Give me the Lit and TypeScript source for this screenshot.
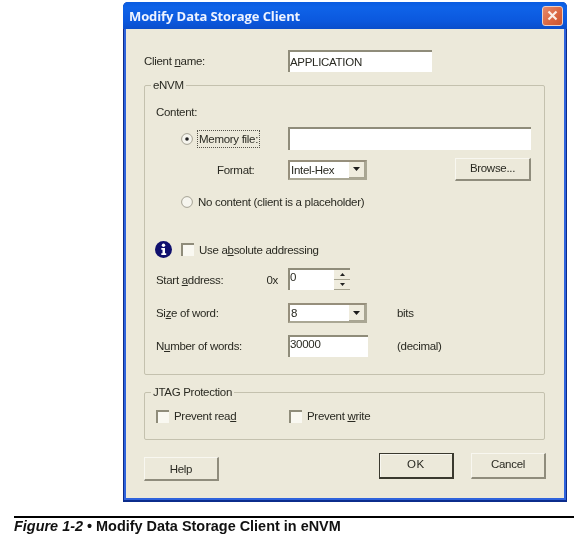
import { LitElement, html, css } from "lit";
import { customElement } from "lit/decorators.js";

const arrow = html`<svg class="tri" viewBox="0 0 7 4" width="7" height="4"><path d="M0 0H7L3.5 4Z" fill="#1c1c1c"/></svg>`;

@customElement("app-root")
export class AppRoot extends LitElement {
  static styles = css`
    :host { display: block; width: 574px; height: 537px; background: #fff; overflow: hidden;
      font-family: "Liberation Sans", Arial, sans-serif; font-size: 11.5px; letter-spacing: -0.3px; color: #2a2a22; }
    * { box-sizing: border-box; }
    .dialog { margin: 2px 0 0 123px; width: 444px; height: 500px; border-radius: 5px 5px 0 0;
      background: #2f63dc; padding: 0 2px 2px; border: solid #0b2c8c; border-width: 0 1px 2px 1px;
      display: flex; flex-direction: column; filter: blur(0.4px); }
    .title { height: 27px; margin: 0 -3px; padding: 0 4px 0 6px; border-radius: 5px 5px 0 0;
      background: linear-gradient(#0a5ce0, #0f63e8 20%, #0b58de 70%, #0a4ecb);
      display: flex; align-items: center; justify-content: space-between; }
    .title span { font: bold 13px "Open Sans", Verdana, sans-serif; letter-spacing: -0.1px; color: #eef3ff; }
    .close { width: 21px; height: 20px; border: 1px solid #eccfc4; border-radius: 3px;
      background: linear-gradient(135deg, #e58a6c, #d9653f 60%, #c9552f); display: flex; align-items: center; justify-content: center; }
    .body { flex: 1; background: #ece9da; padding: 21px 17px 0 18px; }
    .row { display: flex; align-items: center; }
    .lab { width: 132px; flex: none; }
    .top { height: 22px; }
    .top .lab { width: 144px; }
    .group { position: relative; width: 401px; border: 1px solid #c4c1ae; border-radius: 2px; padding: 0 13px 0 11px; }
    .group.env { margin-top: 13px; padding-top: 18px; padding-bottom: 17px; }
    .group.jtag { margin-top: 17px; padding-top: 16px; padding-bottom: 16px; }
    .legend { position: absolute; left: 6px; top: -8px; background: #ece9da; padding: 0 2px; line-height: 15px; }
    .h16 { height: 16px; }
    .field { background: #fff; border-style: solid; border-width: 2px 0 0 2px; border-color: #8f8c7a;
      padding: 0; display: flex; align-items: center; height: 100%; }
    .name { width: 144px; height: 22px; }
    .memrow { margin-top: 7px; height: 23px; }
    .mem { width: 243px; height: 23px; }
    .indent { display: flex; align-items: center; }
    .radio { width: 12px; height: 12px; margin-left: 25px; flex: none; }
    .focus { margin-left: 4px; padding: 1px 1px; border: 1px dotted #55534a; line-height: 14px; }
    .fmtrow { height: 23px; margin-top: 8px; }
    .fmtrow .lab { padding-left: 61px; }
    .select { width: 79px; height: 20px; background: #fff; border: 2px solid; border-color: #968f7c #aaa794 #aaa794 #968f7c;
      display: flex; align-items: center; justify-content: space-between; padding-left: 1px; }
    .dd { width: 16px; height: 16px; background: #efecde; border-right: 1px solid #a8a592; border-bottom: 1px solid #a8a592;
      display: flex; align-items: center; justify-content: center; }
    .btn { display: flex; align-items: center; justify-content: center; background: #ece9da;
      border-style: solid; border-width: 1px 2px 2px 1px; border-color: #f8f7f0 #8f8c7c #8f8c7c #f8f7f0; }
    .browse { width: 76px; height: 23px; margin-left: auto; padding-bottom: 3px; }
    .norow { height: 16px; margin-top: 13px; }
    .norow .txt { margin-left: 5px; }
    .absrow { height: 17px; margin-top: 31px; }
    .info { width: 17px; height: 17px; margin-left: -1px; flex: none; }
    .cb { width: 13px; height: 13px; flex: none; background: #f9f8f1; border-style: solid; border-width: 2px 0 0 2px; border-color: #8f8c7a; }
    .absrow .cb { margin-left: 9px; }
    .absrow .txt { margin-left: 5px; }
    .startrow { height: 22px; margin-top: 10px; }
    .startrow .lab { display: flex; justify-content: space-between; padding-right: 10px; padding-top: 2px; }
    .spin { width: 62px; height: 22px; background: #fff; border-style: solid; border-width: 2px 0 0 2px; border-color: #8f8c7a;
      display: flex; justify-content: space-between; padding-left: 0; align-items: flex-start; line-height: 15px; }
    .spinbtns { width: 16px; height: 20px; display: flex; flex-direction: column; justify-content: space-between; }
    .spinbtns i { height: 10px; background: #efecde; display: flex; align-items: center; justify-content: center; border-bottom: 1px solid #a8a592; }
    .sizerow { height: 20px; margin-top: 13px; }
    .unit { margin-left: 30px; }
    .unit.decimal { margin-left: 29px; }
    .numrow { height: 22px; margin-top: 12px; }
    .num { width: 80px; height: 22px; align-items: flex-start; line-height: 15px; }
    .jrow { height: 14px; display: flex; align-items: center; }
    .jitem { display: flex; align-items: center; gap: 5px; }
    .jitem.a { width: 133px; }
    .actions { display: flex; align-items: flex-start; margin-top: 13px; }
    .help { width: 75px; height: 24px; margin-top: 4px; }
    .ok { width: 75px; height: 26px; margin-left: 160px; border-width: 1px 2px 2px 1px; border-color: #3a392e; box-shadow: inset 1px 1px 0 #f8f7f0; letter-spacing: 0.6px; padding-bottom: 3px; }
    .cancel { width: 75px; height: 26px; margin-left: 17px; padding-bottom: 3px; }
    .rule { margin: 14px 0 0 14px; border-top: 2px solid #000; }
    .cap { margin-left: 14px; font: bold 14.45px/17px "Liberation Sans", Arial, sans-serif; letter-spacing: 0; color: #111; filter: blur(0.3px); }
    .cap em { font-style: italic; }
  `;

  render() {
    return html`
      <div class="dialog">
        <div class="title">
          <span>Modify Data Storage Client</span>
          <div class="close"><svg viewBox="0 0 11 11" width="11" height="11"><path d="M1.5 1.5L9.5 9.5M9.5 1.5L1.5 9.5" stroke="#fbeee6" stroke-width="2.2"/></svg></div>
        </div>
        <div class="body">
          <div class="row top">
            <div class="lab">Client <u>n</u>ame:</div>
            <div class="field name">APPLICATION</div>
          </div>
          <div class="group env">
            <div class="legend">eNVM</div>
            <div class="row h16">Content:</div>
            <div class="row memrow">
              <div class="lab indent">
                <svg class="radio" viewBox="0 0 12 12"><circle cx="6" cy="6" r="5.4" fill="#f6f5ee" stroke="#a5a294"/><circle cx="6" cy="6" r="1.8" fill="#222"/></svg>
                <span class="focus">Memory file:</span>
              </div>
              <div class="field mem"></div>
            </div>
            <div class="row fmtrow">
              <div class="lab">Format:</div>
              <div class="select">Intel-Hex<div class="dd">${arrow}</div></div>
              <div class="btn browse">Browse...</div>
            </div>
            <div class="row norow">
              <svg class="radio" viewBox="0 0 12 12"><circle cx="6" cy="6" r="5.4" fill="#f6f5ee" stroke="#a5a294"/></svg>
              <span class="txt">No content (client is a placeholder)</span>
            </div>
            <div class="row absrow">
              <svg class="info" viewBox="0 0 17 17"><circle cx="8.5" cy="8.5" r="8.5" fill="#10106e"/><circle cx="8.5" cy="4.3" r="1.7" fill="#fff"/><path d="M6.3 7H10V12.2H11.2V14H6.3V12.2H7.5V8.8H6.3Z" fill="#fff"/></svg>
              <div class="cb"></div>
              <span class="txt">Use a<u>b</u>solute addressing</span>
            </div>
            <div class="row startrow">
              <div class="lab"><span>Start <u>a</u>ddress:</span><span>0x</span></div>
              <div class="spin"><span>0</span>
                <div class="spinbtns">
                  <i><svg viewBox="0 0 5 3" width="5" height="3"><path d="M0 3H5L2.5 0Z" fill="#222"/></svg></i>
                  <i><svg viewBox="0 0 5 3" width="5" height="3"><path d="M0 0H5L2.5 3Z" fill="#222"/></svg></i>
                </div>
              </div>
            </div>
            <div class="row sizerow">
              <div class="lab">Si<u>z</u>e of word:</div>
              <div class="select">8<div class="dd">${arrow}</div></div>
              <span class="unit">bits</span>
            </div>
            <div class="row numrow">
              <div class="lab">N<u>u</u>mber of words:</div>
              <div class="field num">30000</div>
              <span class="unit decimal">(decimal)</span>
            </div>
          </div>
          <div class="group jtag">
            <div class="legend">JTAG Protection</div>
            <div class="jrow">
              <div class="jitem a"><div class="cb"></div><span>Prevent rea<u>d</u></span></div>
              <div class="jitem"><div class="cb"></div><span>Prevent <u>w</u>rite</span></div>
            </div>
          </div>
          <div class="actions">
            <div class="btn help">Help</div>
            <div class="btn ok">OK</div>
            <div class="btn cancel">Cancel</div>
          </div>
        </div>
      </div>
      <div class="rule"></div>
      <div class="cap"><em>Figure 1-2</em> • Modify Data Storage Client in eNVM</div>
    `;
  }
}
